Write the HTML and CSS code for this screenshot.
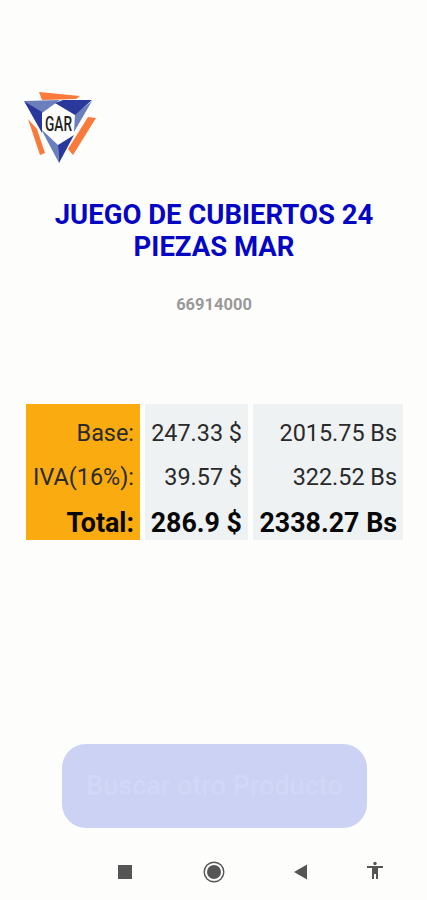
FILE: index.html
```html
<!DOCTYPE html>
<html lang="es">
<head>
    <meta charset="UTF-8">
    <meta name="viewport" content="width=device-width, initial-scale=1.0">
    <title>GAR</title>
    <link rel="stylesheet" href="styles.css">
</head>
<body>
    <div class="screen">
        <header class="header">
            <svg class="logo" viewBox="0 0 90 90" role="img">
                <path fill="#fa7a3c" d="M24 10 L65 14 L61 17 L27 18Z M13 37 L22 47 L30 71 L25 73Z M73 35 L81 36 L58 73 L53 67Z"/>
                <path fill="#6c7fbd" d="M9 19 L45 18 L27 31Z M77 19 L59 50 L60 32Z M26 47 L43 63 L44 81Z"/>
                <path fill="#29389a" d="M9 19 L27 30 L27 51Z M40 21 L48 18 L77 18 L60 33Z M44 81 L43 63 L59 53Z"/>
                <text class="logo-text" x="30" y="49" textLength="27" lengthAdjust="spacingAndGlyphs">GAR</text>
            </svg>
        </header>

        <main class="product">
            <h1 class="name">JUEGO DE CUBIERTOS 24<br>PIEZAS MAR</h1>
            <p class="code">66914000</p>

            <div class="prices">
                <div class="column labels">
                    <span>Base:</span>
                    <span>IVA(16%):</span>
                    <strong>Total:</strong>
                </div>
                <div class="column">
                    <span>247.33 $</span>
                    <span>39.57 $</span>
                    <strong>286.9 $</strong>
                </div>
                <div class="column">
                    <span>2015.75 Bs</span>
                    <span>322.52 Bs</span>
                    <strong>2338.27 Bs</strong>
                </div>
            </div>

            <button class="search-btn">Buscar otro Producto</button>
        </main>

        <nav class="navbar">
            <svg viewBox="0 0 24 24"><path d="M5 5h14v14H5z"/></svg>
            <svg viewBox="0 0 24 24"><circle cx="12" cy="12" r="9.8" fill="none" stroke="#555" stroke-width="1.4"/><circle cx="12" cy="12" r="7"/></svg>
            <svg viewBox="0 0 24 24"><path d="M5 12 L18 4.5V19.5Z"/></svg>
            <svg viewBox="0 0 24 24"><circle cx="12" cy="3.500" r="1.7"/><path d="M4 6h16v2h-5V19h-2v-5h-2v5H9V8H4z"/></svg>
        </nav>
    </div>
</body>
</html>
```
FILE: styles.css
```css
* {
    box-sizing: border-box;
}
body {
    font-family: Roboto, sans-serif;
    margin: 0;
    background-color: #fdfefc;
}
.screen {
    display: flex;
    flex-direction: column;
    height: 900px;
}
.header {
    height: 199px;
    padding: 82px 15px 0;
}
.logo {
    display: block;
    width: 90px;
    height: 90px;
}
.logo-text {
    font-family: Roboto, sans-serif;
    font-size: 21px;
    font-weight: 500;
    fill: #222;
}
.product {
    display: flex;
    flex-direction: column;
    align-items: center;
    padding-left: 2px;
}
.name {
    margin: 0;
    padding-right: 1px;
    color: #0505c4;
    font-size: 27.5px;
    font-weight: 700;
    line-height: 32px;
    text-align: center;
}
.code {
    margin: 32px 0 0;
    padding-right: 1px;
    color: #999;
    font-size: 16.5px;
    font-weight: 700;
    line-height: 20px;
}
.prices {
    display: grid;
    grid-template-columns: 114px 103px 150px;
    grid-template-rows: 136px;
    gap: 5px;
    margin-top: 89px;
}
.column {
    display: flex;
    flex-direction: column;
    align-items: flex-end;
    padding: 7px 6px 0 0;
    background-color: #eff2f3;
    color: #2a2a2a;
    font-size: 23.4px;
    font-weight: 400;
    line-height: 44px;
    white-space: nowrap;
}
.column strong {
    color: #080808;
    font-size: 26.8px;
    font-weight: 700;
    line-height: 48px;
}
.labels {
    background-color: #f9ab10;
}
.search-btn {
    width: 305px;
    height: 84px;
    margin-top: 204px;
    border: none;
    border-radius: 24px;
    background-color: #cbd2f4;
    color: #d1d7f6;
    font-family: inherit;
    font-size: 27px;
    font-weight: 500;
}
.navbar {
    display: grid;
    grid-template-columns: 89px 87px 74px 24px;
    margin: 32px 0 0 113px;
}
.navbar svg {
    width: 24px;
    height: 24px;
    fill: #555;
}
```
